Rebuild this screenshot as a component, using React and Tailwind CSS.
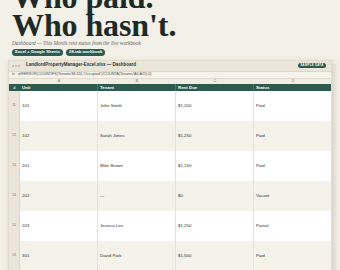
import React from "react";

const rows = [
  ["101", "John Smith", "$1,200", "Paid"],
  ["102", "Sarah Jones", "$1,250", "Paid"],
  ["201", "Mike Brown", "$1,150", "Paid"],
  ["202", "—", "$0", "Vacant"],
  ["203", "Jessica Lee", "$1,250", "Partial"],
  ["301", "David Park", "$1,500", "Paid"],
];

export default function App() {
  return (
    <div className="w-[340px] h-[270px] overflow-hidden bg-[#f3f0e8] text-[#1f2d29]">
      <div className="px-3">
        <h1
          className="-mt-[17px] text-[32px] leading-[28px] font-bold tracking-[-0.1px] text-[#1d2b27]"
          style={{ fontFamily: '"Liberation Serif", serif' }}
        >
          Who paid.
          <br />
          Who hasn't.
        </h1>
        <p
          className="mt-[1px] text-[5.3px] leading-[7px] italic text-[#56645f]"
          style={{ fontFamily: '"Liberation Serif", serif' }}
        >
          Dashboard — This Month rent status from the live workbook
        </p>
        <div
          className="mt-[2px] flex gap-[3px]"
          style={{ fontFamily: '"Liberation Sans", sans-serif' }}
        >
          <span className="rounded-full bg-[#2f5b50] px-[3px] text-[4.2px] leading-[6.5px] font-bold text-white">
            Excel + Google Sheets
          </span>
          <span className="rounded-full bg-[#2f5b50] px-[3px] text-[4.2px] leading-[6.5px] font-bold text-white">
            28-tab workbook
          </span>
        </div>
      </div>

      <div
        className="mt-[4px] ml-[8px] w-[324px] bg-white shadow-[2px_2px_6px_rgba(60,50,30,0.18)] border border-[#e2ddd0]"
        style={{ fontFamily: '"Liberation Sans", sans-serif' }}
      >
        <div className="flex items-center h-[11px] bg-[#e9e5d9] px-[3px] border-b border-[#ddd8ca]">
          <div className="flex gap-[1px]">
            <span className="w-[2px] h-[2px] rounded-full bg-[#b9b3a4]" />
            <span className="w-[2px] h-[2px] rounded-full bg-[#b9b3a4]" />
            <span className="w-[2px] h-[2px] rounded-full bg-[#b9b3a4]" />
          </div>
          <span className="ml-[6px] text-[4.5px] font-bold text-[#2a3531]">
            LandlordPropertyManager-Excel.xlsx — Dashboard
          </span>
          <span className="ml-auto mr-[2px] rounded-full bg-[#2f5b50] px-[2.5px] text-[2.8px] leading-[5px] font-bold tracking-[0.3px] text-white">
            SAMPLE DATA
          </span>
        </div>
        <div className="flex items-center h-[7px] bg-[#f5f2ea] px-[3px] border-b border-[#e2ddd0]">
          <span className="text-[3.8px] italic text-[#6a6a60]">fx</span>
          <span className="ml-[3px] text-[3.7px] text-[#4a4f4a]">
            =IFERROR(COUNTIFS(Tenants!M:J20,"Occupied")/COUNTA(Tenants!A6:A25),0)
          </span>
        </div>
        <div className="grid grid-cols-[11px_78px_78px_78px_78px] h-[5px] bg-[#f0ece2] text-[3.6px] leading-[5px] text-[#7b776c] text-center">
          <span />
          <span>A</span>
          <span>B</span>
          <span>C</span>
          <span>D</span>
        </div>
        <div className="grid grid-cols-[11px_78px_78px_78px_78px] h-[7px] bg-[#2e5a4e] text-[4.4px] leading-[7px] font-bold text-white">
          <span className="text-center text-[#cfe0da]">#</span>
          <span className="pl-[2px] border-r border-[#4f7569]">Unit</span>
          <span className="pl-[2px] border-r border-[#4f7569]">Tenant</span>
          <span className="pl-[2px] border-r border-[#4f7569]">Rent Due</span>
          <span className="pl-[2px]">Status</span>
        </div>
        {rows.map((r, i) => (
          <div
            key={r[0]}
            className={`grid grid-cols-[11px_78px_78px_78px_78px] h-[30px] text-[4.4px] text-[#2c302d] ${
              i % 2 === 1 ? "bg-[#f5f2ea]" : "bg-white"
            }`}
          >
            <span className="flex items-center justify-center bg-[#ebe6d9] border-r border-[#dcd6c7] text-[3.6px] text-[#7b776c]">
              {i + 11}
            </span>
            <span className="flex items-center pl-[2px] pt-[1px] border-r border-[#e6e2d8]">{r[0]}</span>
            <span className="flex items-center pl-[2px] pt-[1px] border-r border-[#e6e2d8]">{r[1]}</span>
            <span className="flex items-center pl-[2px] pt-[1px] border-r border-[#e6e2d8]">{r[2]}</span>
            <span className="flex items-center pl-[2px] pt-[1px]">{r[3]}</span>
          </div>
        ))}
      </div>
    </div>
  );
}
